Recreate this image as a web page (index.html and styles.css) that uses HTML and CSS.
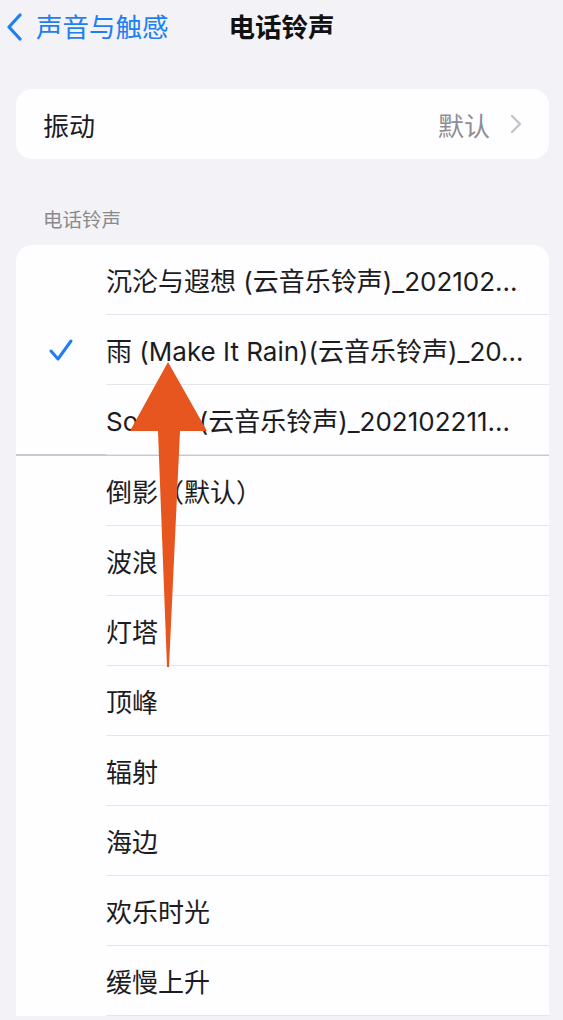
FILE: index.html
```html
<!DOCTYPE html>
<html lang="zh-CN">
<head>
<meta charset="utf-8">
<title>电话铃声</title>
<link rel="stylesheet" href="styles.css">
</head>
<body>
<div class="screen">
  <header class="nav">
    <a class="back" href="#">
      <svg class="back-icon" width="18" height="28" viewBox="0 0 18 28" aria-hidden="true">
        <path d="M14 2 L3 14 L14 26" fill="none" stroke="currentColor" stroke-width="3.2" stroke-linecap="round" stroke-linejoin="round"/>
      </svg>
      <span>声音与触感</span>
    </a>
    <h1 class="title">电话铃声</h1>
    <span></span>
  </header>

  <section class="group">
    <div class="row-simple">
      <span class="label">振动</span>
      <span class="detail">默认
        <svg class="chev" width="12" height="20" viewBox="0 0 12 20" aria-hidden="true">
          <path d="M2 2 L10 10 L2 18" fill="none" stroke="currentColor" stroke-width="2.4" stroke-linecap="round" stroke-linejoin="round"/>
        </svg>
      </span>
    </div>
  </section>

  <h2 class="section-title">电话铃声</h2>

  <section class="group list">
    <div class="tone"><span class="mark"></span><span class="name">沉沦与遐想 (云音乐铃声)_202102...</span></div>
    <div class="tone"><span class="mark">
      <svg width="26" height="24" viewBox="0 0 26 24" aria-hidden="true">
        <path d="M3 13 L10 21 L23 3" fill="none" stroke="currentColor" stroke-width="3" stroke-linecap="round" stroke-linejoin="round"/>
      </svg></span><span class="name">雨 (Make It Rain)(云音乐铃声)_20...</span></div>
    <div class="tone"><span class="mark"></span><span class="name">Sonata (云音乐铃声)_202102211...</span></div>
    <div class="divider"></div>
    <div class="tone"><span class="mark"></span><span class="name">倒影（默认）</span></div>
    <div class="tone"><span class="mark"></span><span class="name">波浪</span></div>
    <div class="tone"><span class="mark"></span><span class="name">灯塔</span></div>
    <div class="tone"><span class="mark"></span><span class="name">顶峰</span></div>
    <div class="tone"><span class="mark"></span><span class="name">辐射</span></div>
    <div class="tone"><span class="mark"></span><span class="name">海边</span></div>
    <div class="tone"><span class="mark"></span><span class="name">欢乐时光</span></div>
    <div class="tone"><span class="mark"></span><span class="name">缓慢上升</span></div>
  </section>

  <!-- pointer arrow drawn over the list -->
  <svg class="pointer" width="563" height="1020" viewBox="0 0 563 1020" aria-hidden="true">
    <path d="M168 362 L207 431 L180 431 L169 667 L167 667 L158 431 L130 431 Z" fill="#e8561f"/>
  </svg>
</div>
</body>
</html>
```

FILE: styles.css
```css
html, body {
  margin: 0;
  padding: 0;
}

body {
  background: #f2f2f7;
  font-family: Inter, "Noto Sans CJK SC", sans-serif;
  color: #1c1c1e;
}

.screen {
  position: relative;
  width: 563px;
  height: 1020px;
  overflow: hidden;
}

/* navigation bar */
.nav {
  height: 54px;
  display: grid;
  grid-template-columns: 1fr auto 1fr;
  align-items: center;
}

.back {
  display: flex;
  align-items: center;
  gap: 12px;
  padding-left: 6px;
  color: #1f7ff0;
  text-decoration: none;
  font-size: 26.5px;
  line-height: 1;
  white-space: nowrap;
}

.back-icon {
  flex: none;
}

.title {
  margin: 0;
  font-size: 26.5px;
  font-weight: 600;
  line-height: 1;
  color: #111;
}

/* grouped cards */
.group {
  background: #fefdff;
  border-radius: 16px;
  margin: 35px 14px 0 16px;
}

.row-simple {
  height: 70px;
  display: flex;
  align-items: center;
  justify-content: space-between;
  padding: 0 27px 0 27px;
  font-size: 26px;
}

.detail {
  display: flex;
  align-items: center;
  gap: 20px;
  color: #8e8e93;
}

.chev {
  color: #c4c4c7;
}

.section-title {
  margin: 48px 0 12px 43px;
  font-size: 19.5px;
  font-weight: 400;
  line-height: 26px;
  color: #8a8a8e;
}

.list {
  margin-top: 0;
  border-radius: 16px 16px 0 0;
}

.tone {
  display: grid;
  grid-template-columns: 90px 1fr;
  height: 70px;
}

.mark {
  display: flex;
  align-items: center;
  justify-content: center;
  color: #1f7ff0;
}

.name {
  display: flex;
  align-items: center;
  border-bottom: 1px solid #e6e6ea;
  font-size: 26px;
  white-space: nowrap;
  overflow: hidden;
}

.divider {
  height: 2px;
  background: #c9c9cd;
  margin-top: -1px;
}

.pointer {
  position: absolute;
  left: 0;
  top: 0;
  pointer-events: none;
}
```
